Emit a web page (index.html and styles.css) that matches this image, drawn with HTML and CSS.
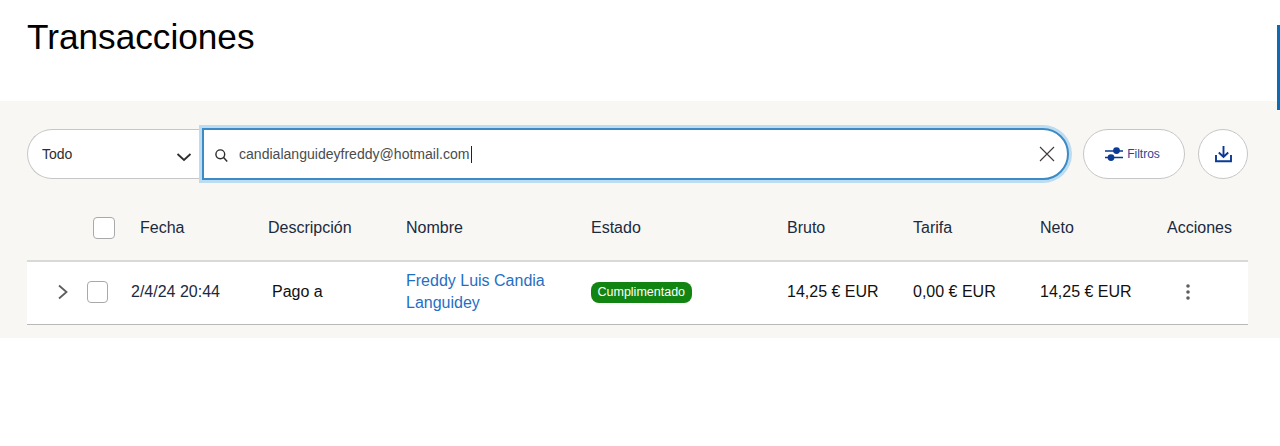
FILE: index.html
```html
<!DOCTYPE html>
<html lang="es">
<head>
<meta charset="utf-8">
<title>Transacciones</title>
<link rel="stylesheet" href="styles.css">
</head>
<body>
<header class="page-head">
  <h1 class="title">Transacciones</h1>
</header>
<div class="side-marker"></div>
<main class="panel">
  <section class="toolbar">
    <div class="select">
      <span>Todo</span>
      <svg class="select-caret" width="16" height="10" viewBox="0 0 16 10"><path d="M1.5 2 L8 8 L14.5 2" fill="none" stroke="#2c2e2f" stroke-width="1.8"/></svg>
    </div>
    <div class="search">
      <svg class="search-icon" width="15" height="15" viewBox="0 0 15 15"><circle cx="6.3" cy="6.3" r="4.4" fill="none" stroke="#2c2e2f" stroke-width="1.4"/><path d="M9.6 9.6 L13.2 13.4" stroke="#2c2e2f" stroke-width="1.5"/></svg>
      <span class="search-text">candialanguideyfreddy@hotmail.com</span><span class="caret"></span>
      <svg class="clear-icon" width="16" height="16" viewBox="0 0 16 16"><path d="M1 1 L15 15 M15 1 L1 15" stroke="#40383c" stroke-width="1.1"/></svg>
    </div>
    <button class="btn btn-filter">
      <svg width="18" height="16" viewBox="0 0 18 16"><path d="M0 5 H18 M0 11.5 H18" stroke="#0b3a94" stroke-width="1.5"/><circle cx="11.5" cy="4.6" r="3.4" fill="#0b3a94"/><circle cx="6" cy="11.6" r="3.4" fill="#0b3a94"/></svg>
      <span>Filtros</span>
    </button>
    <button class="btn btn-icon">
      <svg width="17" height="18" viewBox="0 0 17 18"><path d="M8.5 1 V11.5 M3.8 7.5 L8.5 12 L13.2 7.5" fill="none" stroke="#0b3a94" stroke-width="1.9"/><path d="M1 10 V16.2 H16 V10" fill="none" stroke="#0b3a94" stroke-width="1.9"/></svg>
    </button>
  </section>

  <section class="table">
    <div class="tr th-row">
      <div></div>
      <div class="cell-check-head"><span class="checkbox"></span></div>
      <div class="pad-fecha">Fecha</div>
      <div>Descripción</div>
      <div>Nombre</div>
      <div>Estado</div>
      <div>Bruto</div>
      <div>Tarifa</div>
      <div>Neto</div>
      <div>Acciones</div>
    </div>
    <div class="tr td-row">
      <div class="cell-expand">
        <svg width="12" height="16" viewBox="0 0 12 16"><path d="M2 1.5 L9.5 8 L2 14.5" fill="none" stroke="#5c5f62" stroke-width="1.8"/></svg>
      </div>
      <div><span class="checkbox checkbox-row"></span></div>
      <div class="muted-dark">2/4/24 20:44</div>
      <div class="pad-desc">Pago a</div>
      <div><a class="link" href="#">Freddy Luis Candia Languidey</a></div>
      <div><span class="badge">Cumplimentado</span></div>
      <div>14,25 € EUR</div>
      <div>0,00 € EUR</div>
      <div>14,25 € EUR</div>
      <div class="cell-actions">
        <svg width="4" height="16" viewBox="0 0 4 16"><circle cx="2" cy="2" r="1.8" fill="#5c5f62"/><circle cx="2" cy="8" r="1.8" fill="#5c5f62"/><circle cx="2" cy="14" r="1.8" fill="#5c5f62"/></svg>
      </div>
    </div>
  </section>
</main>
</body>
</html>
```
FILE: styles.css
```css
* { box-sizing: border-box; }
html, body { margin: 0; padding: 0; }
body {
  background: #fff;
  font-family: "Liberation Sans", Arial, sans-serif;
  color: #000;
  height: 446px;
  overflow: hidden;
  position: relative;
}
.page-head { height: 101px; padding: 16px 27px 0; }
.title { margin: 0; font-size: 35.2px; line-height: 42px; font-weight: 400; }
.side-marker {
  position: absolute; right: 0; top: 25px;
  width: 3px; height: 85px; background: #0a6cb5;
}
.panel { background: #f9f7f3; height: 237px; padding: 28px 32px 0 27px; }
.toolbar { display: flex; align-items: center; height: 50px; }
.select {
  width: 180px; height: 50px; flex: none;
  background: #fff; border: 1px solid #c6c6c6; border-right: 0;
  border-radius: 25px 0 0 25px;
  display: flex; align-items: center; justify-content: space-between;
  padding: 0 15px 0 14px;
  font-size: 14px; color: #2c2e2f;
}
.select-caret { margin-top: 5px; }
.search {
  margin-left: -5px; width: 867px; height: 52px; flex: none;
  background: #fff; border: 2px solid #3d8bc4;
  border-radius: 0 26px 26px 0;
  box-shadow: 0 0 0 3px #bcdcf1;
  display: flex; align-items: center;
  padding: 0 11px 0 10px;
  font-size: 14.05px; color: #4a4c4d;
  position: relative;
}
.search-icon { margin-right: 10px; margin-top: 2px; }
.caret { width: 1px; height: 17px; background: #222; margin-left: 1px; }
.clear-icon { margin-left: auto; margin-right: 1px; }
.btn {
  background: #fff; border: 1px solid #c6c6c6; border-radius: 25px; height: 50px; padding: 0;
  display: flex; align-items: center; justify-content: center; flex: none;
  font-family: inherit; color: #1d4a9a;
}
.btn-filter { width: 102px; margin-left: 14px; gap: 4px; font-size: 12px; padding-right: 3px; }
.btn-icon { width: 50px; margin-left: 13px; }

.table { margin-top: 21px; }
.tr {
  display: grid;
  grid-template-columns: 60px 44px 137px 138px 185px 196px 126px 127px 127px 81px;
  align-items: center;
  font-size: 16px;
}
.th-row { height: 60px; color: #1b2a3e; padding-bottom: 4px; }
.td-row {
  height: 65px; background: #fff; padding-bottom: 2px;
  border-top: 2px solid #d9d9d6; border-bottom: 1px solid #b9b9b9;
  color: #111;
}
.checkbox {
  display: block; width: 22px; height: 22px;
  background: #fff; border: 1px solid #a9a9a9; border-radius: 4px;
}
.checkbox-row { width: 21px; }
.cell-check-head { padding-left: 6px; }
.pad-fecha { padding-left: 9px; }
.pad-desc { padding-left: 4px; }
.cell-expand { padding-left: 30px; display: flex; }
.muted-dark { color: #1b2a3e; }
.link { color: #1f6fc4; text-decoration: none; line-height: 22px; display: block; width: 150px; }
.badge {
  display: inline-block; background: #128412; color: #fff;
  font-size: 12.5px; line-height: 21px; height: 21px; padding: 0 6.5px; border-radius: 8px;
}
.cell-actions { display: flex; padding-left: 19px; }
```
